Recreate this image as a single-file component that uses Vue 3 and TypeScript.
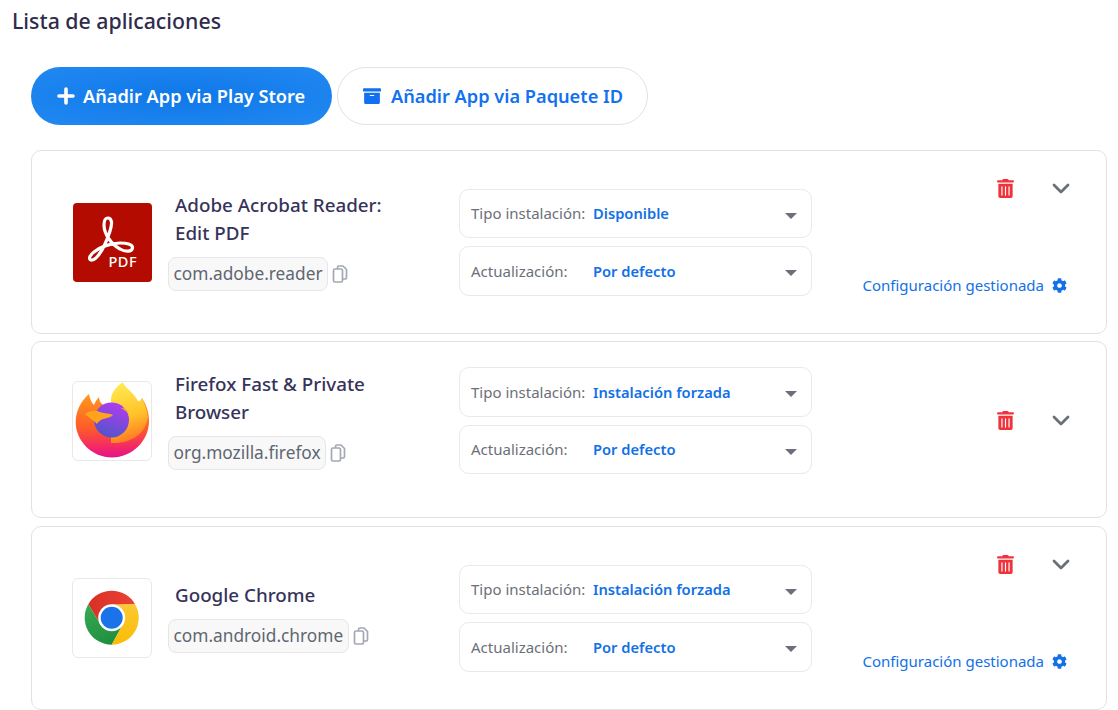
<template>
  <div class="page">
    <h2 class="heading">Lista de aplicaciones</h2>

    <div class="toolbar">
      <button class="btn btn-primary">
        <svg class="btn-plus" viewBox="0 0 18 18"><path d="M9 2v14M2 9h14" /></svg>
        Añadir App via Play Store
      </button>
      <button class="btn btn-outline">
        <svg class="btn-box" viewBox="0 0 512 512"><path d="M32 448c0 17.7 14.3 32 32 32h384c17.7 0 32-14.3 32-32V160H32v288zm160-212c0-6.6 5.4-12 12-12h104c6.6 0 12 5.4 12 12v8c0 6.6-5.4 12-12 12H204c-6.6 0-12-5.4-12-12v-8zM480 32H32C14.3 32 0 46.3 0 64v48c0 8.8 7.2 16 16 16h480c8.8 0 16-7.2 16-16V64c0-17.7-14.3-32-32-32z" /></svg>
        Añadir App via Paquete ID
      </button>
    </div>

    <div class="list">
      <div v-for="app in apps" :key="app.pkg" class="card" :class="{ plain: !app.managed }">
        <div class="logo" :class="{ bordered: app.icon !== 'adobe' }">
          <svg v-if="app.icon === 'adobe'" viewBox="0 0 79 79" width="79" height="79">
            <rect width="79" height="79" rx="4" fill="#b30b00" />
            <path d="M35 15C32 15 31 18 31 22C31 31 38 41 47 46C52 49 59 49 59.500 45C60 41 53 40 47 40C38 40 27 44 21 49C17 52 15 56 18 57C22 58 28 50 32 41C36 32 39 24 38.500 19C38 16 37 15 35 15Z" fill="none" stroke="#fff" stroke-width="3.200" />
            <text x="35.500" y="63.500" class="pdf">PDF</text>
          </svg>
          <svg v-else-if="app.icon === 'firefox'" viewBox="0 0 80 80" width="80" height="80">
            <defs>
              <linearGradient id="ffBody" x1="0.500" y1="0" x2="0.500" y2="1">
                <stop offset="0" stop-color="#ff9a1c" />
                <stop offset="0.550" stop-color="#ff5a2a" />
                <stop offset="0.850" stop-color="#f2256a" />
                <stop offset="1" stop-color="#e0148c" />
              </linearGradient>
              <linearGradient id="ffFlame" x1="0.400" y1="0" x2="0.600" y2="1">
                <stop offset="0" stop-color="#ffe94d" />
                <stop offset="0.550" stop-color="#ffc42a" />
                <stop offset="1" stop-color="#ff6f24" />
              </linearGradient>
              <linearGradient id="ffGlobe" x1="0.700" y1="0" x2="0.300" y2="1">
                <stop offset="0" stop-color="#b13cf0" />
                <stop offset="1" stop-color="#4f55c8" />
              </linearGradient>
            </defs>
            <path d="M17 13C18 18 19 21 22 24C23 21 25 18 27 16C27 20 29 23 33 25L60 25C66 30 70 17 70 17C75 25 77 32 77 40C77 60 60 76.500 40 76.500C20 76.500 3.700 60 3.700 41C3.700 30 9 20 17 13Z" fill="url(#ffBody)" />
            <path d="M50.700 1.300C44 6 39 12 39 19L39 62C60 63 74 52 76 36C75 28 72 22 70 17C68 20 67 21 66 20C62 12 54 8 50.700 1.300Z" fill="url(#ffFlame)" />
            <circle cx="39.500" cy="39" r="17.500" fill="url(#ffGlobe)" />
            <path d="M13 33C18 29 24 29 28 31C33 33 38 32 41 34C38 37 34 37 31 38C28 39 26 41 25 43C23 40 18 38 13 33Z" fill="#ffa31f" />
            <path d="M49 27C53 27 56 29 57 33C55 30 52 29 49 27Z" fill="#ffb52b" />
          </svg>
          <svg v-else viewBox="0 0 80 80" width="80" height="80">
            <defs>
              <linearGradient id="crRed" x1="0" y1="0" x2="1" y2="0">
                <stop offset="0" stop-color="#d93025" />
                <stop offset="1" stop-color="#ea4335" />
              </linearGradient>
              <linearGradient id="crGreen" x1="0.200" y1="0" x2="0.700" y2="1">
                <stop offset="0" stop-color="#34a853" />
                <stop offset="1" stop-color="#1e8e3e" />
              </linearGradient>
              <linearGradient id="crYellow" x1="0.500" y1="0" x2="0.500" y2="1">
                <stop offset="0" stop-color="#fcc934" />
                <stop offset="1" stop-color="#fbbc04" />
              </linearGradient>
            </defs>
            <path d="M63.100 26.200A27 27 0 0 0 16.300 26.200L28.400 46.200L39.700 26.700Z" fill="url(#crRed)" />
            <path d="M16.300 26.200A27 27 0 0 0 39.700 66.700L51 46.200L28.400 46.200Z" fill="url(#crGreen)" />
            <path d="M39.700 66.700A27 27 0 0 0 63.100 26.200L39.700 26.700L51 46.200Z" fill="url(#crYellow)" />
            <circle cx="39.700" cy="39.700" r="13.500" fill="#fff" />
            <circle cx="39.700" cy="39.700" r="11" fill="#1a73e8" />
          </svg>
        </div>

        <div class="info">
          <div class="name">{{ app.name }}</div>
          <div class="pkg-row">
            <span class="pkg">{{ app.pkg }}</span>
            <svg class="copy" viewBox="0 0 16 18" width="16" height="18">
              <path d="M5.500 4V2.500a1.500 1.500 0 0 1 1.500-1.500h4l3.500 3.500v8a1.500 1.500 0 0 1-1.500 1.500h-2" />
              <rect x="1.500" y="4" width="9" height="13" rx="1.500" />
            </svg>
          </div>
        </div>

        <div class="selects">
          <div class="select">
            <span class="select-label">Tipo instalación:</span>
            <span class="select-value">{{ app.install }}</span>
            <span class="caret"></span>
          </div>
          <div class="select">
            <span class="select-label">Actualización:</span>
            <span class="select-value">Por defecto</span>
            <span class="caret"></span>
          </div>
        </div>

        <div class="side">
          <div class="actions">
            <svg class="trash" viewBox="0 0 448 512" width="17" height="19"><path d="M32 464a48 48 0 0 0 48 48h288a48 48 0 0 0 48-48V128H32zm272-256a16 16 0 0 1 32 0v224a16 16 0 0 1-32 0zm-96 0a16 16 0 0 1 32 0v224a16 16 0 0 1-32 0zm-96 0a16 16 0 0 1 32 0v224a16 16 0 0 1-32 0zM432 32H312l-9.400-18.700A24 24 0 0 0 281.100 0H166.800a23.720 23.720 0 0 0-21.400 13.300L136 32H16A16 16 0 0 0 0 48v32a16 16 0 0 0 16 16h416a16 16 0 0 0 16-16V48a16 16 0 0 0-16-16z" /></svg>
            <svg class="chevron" viewBox="0 0 18 11" width="18" height="11"><path d="M2 2l7 7 7-7" /></svg>
          </div>
          <div v-if="app.managed" class="managed">
            Configuración gestionada
            <svg class="gear" viewBox="0 0 512 512" width="15" height="15"><path d="M487.400 315.700l-42.600-24.600c4.300-23.200 4.300-47 0-70.200l42.600-24.600c4.900-2.800 7.100-8.600 5.500-14-11.100-35.600-30-67.800-54.700-94.600-3.800-4.100-10-5.100-14.800-2.300L380.800 110c-17.900-15.400-38.500-27.300-60.800-35.100V25.800c0-5.600-3.900-10.500-9.400-11.700-36.700-8.200-74.300-7.800-109.200 0-5.500 1.200-9.400 6.100-9.400 11.700V75c-22.200 7.900-42.800 19.800-60.800 35.100L88.700 85.500c-4.900-2.800-11-1.900-14.800 2.300-24.700 26.700-43.600 58.900-54.700 94.600-1.700 5.400.6 11.200 5.500 14L67.300 221c-4.300 23.200-4.300 47 0 70.200l-42.600 24.600c-4.900 2.800-7.100 8.600-5.500 14 11.100 35.600 30 67.800 54.700 94.600 3.800 4.100 10 5.100 14.800 2.300l42.600-24.600c17.900 15.400 38.500 27.300 60.800 35.100v49.200c0 5.600 3.900 10.500 9.400 11.700 36.700 8.200 74.300 7.800 109.200 0 5.500-1.200 9.400-6.100 9.400-11.700v-49.200c22.200-7.900 42.800-19.800 60.800-35.100l42.600 24.600c4.900 2.800 11 1.900 14.800-2.300 24.700-26.700 43.600-58.900 54.700-94.600 1.500-5.500-.7-11.300-5.600-14.100zM256 336c-44.100 0-80-35.900-80-80s35.900-80 80-80 80 35.900 80 80-35.900 80-80 80z" /></svg>
          </div>
        </div>
      </div>
    </div>
  </div>
</template>

<script setup lang="ts">
type AppItem = {
  name: string;
  pkg: string;
  icon: 'adobe' | 'firefox' | 'chrome';
  install: string;
  managed: boolean;
};

const apps: AppItem[] = [
  { name: 'Adobe Acrobat Reader: Edit PDF', pkg: 'com.adobe.reader', icon: 'adobe', install: 'Disponible', managed: true },
  { name: 'Firefox Fast & Private Browser', pkg: 'org.mozilla.firefox', icon: 'firefox', install: 'Instalación forzada', managed: false },
  { name: 'Google Chrome', pkg: 'com.android.chrome', icon: 'chrome', install: 'Instalación forzada', managed: true }
];
</script>

<style scoped>
.page {
  width: 1118px;
  height: 710px;
  overflow: hidden;
  background: #fff;
  font-family: "Noto Sans", sans-serif;
}

.heading {
  margin: 0;
  padding: 7px 0 0 12px;
  font-size: 21.300px;
  line-height: 28px;
  font-weight: 500;
  color: #2f2c4b;
}

.toolbar {
  display: flex;
  gap: 5px;
  margin: 32px 0 25px 31px;
}

.btn {
  display: flex;
  align-items: center;
  height: 58px;
  border-radius: 29px;
  font-family: inherit;
  font-size: 18.200px;
  font-weight: 600;
}

.btn-primary {
  width: 301px;
  padding: 0 0 0 26px;
  gap: 8px;
  border: none;
  color: #fff;
  background: radial-gradient(ellipse at center, #0f78e8 0%, #2289f2 100%);
}

.btn-plus {
  width: 18px;
  height: 18px;
  fill: none;
  stroke: #fff;
  stroke-width: 3.600;
  stroke-linecap: round;
}

.btn-outline {
  width: 311px;
  padding: 0 0 0 25px;
  gap: 10px;
  border: 1px solid #e2e2e6;
  color: #1271f0;
  background: #fff;
}

.btn-box {
  width: 18px;
  height: 18px;
  fill: #1271f0;
}

.list {
  display: flex;
  flex-direction: column;
  gap: 7px;
  width: 1076px;
  margin-left: 31px;
}

.card {
  display: flex;
  align-items: center;
  box-sizing: border-box;
  height: 184px;
  padding-left: 41px;
  border: 1px solid #e1e2e6;
  border-radius: 10px;
}

.card.plain {
  height: 177px;
  margin-bottom: 1px;
  padding-bottom: 18px;
}

.logo {
  flex: none;
  box-sizing: border-box;
  width: 80px;
  height: 80px;
  margin-top: 1px;
  margin-right: 15px;
  border-radius: 6px;
}

.logo svg {
  display: block;
}

.logo.bordered {
  position: relative;
  border: 1px solid #e8e8ea;
  margin-top: 0;
  margin-left: -1px;
  margin-right: 16px;
}

.logo.bordered svg {
  margin: -1px;
}

.pdf {
  font-family: "Noto Sans", sans-serif;
  font-size: 14.500px;
  font-weight: 500;
  letter-spacing: 0.5px;
  fill: #fff;
}

.info {
  flex: none;
  width: 291px;
  margin-bottom: 2px;
}

.name {
  width: 225px;
  padding-left: 7px;
  font-size: 18.800px;
  line-height: 28px;
  font-weight: 500;
  color: #36335a;
}

.pkg-row {
  display: flex;
  align-items: center;
  gap: 4px;
  margin-top: 10px;
}

.pkg {
  box-sizing: border-box;
  height: 34px;
  padding: 0 4.500px;
  border: 1px solid #e6e6e8;
  border-radius: 8px;
  background: #f8f8f8;
  font-size: 17.300px;
  line-height: 32px;
  color: #5f6672;
}

.copy {
  fill: #fff;
  stroke: #a3a8b4;
  stroke-width: 1.700;
}

.selects {
  flex: none;
  display: flex;
  flex-direction: column;
  gap: 8px;
  width: 353px;
}

.select {
  display: flex;
  align-items: center;
  box-sizing: border-box;
  height: 49.500px;
  padding: 0 14px 0 11px;
  border: 1px solid #e9e9ec;
  border-radius: 10px;
  font-size: 15px;
}

.select-label {
  width: 122px;
  color: #6b7078;
}

.select-value {
  flex: 1;
  font-size: 14.700px;
  font-weight: 600;
  color: #1271e6;
}

.caret {
  width: 0;
  height: 0;
  margin-top: 5px;
  border-left: 6px solid transparent;
  border-right: 6px solid transparent;
  border-top: 6px solid #6b6f7a;
}

.side {
  flex: 1;
  display: flex;
  flex-direction: column;
  align-items: flex-end;
  justify-content: space-between;
  height: 116px;
  margin-bottom: 10px;
  padding-right: 36px;
}

.card.plain .side {
  height: auto;
  margin-bottom: 0;
}

.actions {
  display: flex;
  align-items: center;
  gap: 38px;
}

.trash {
  fill: #f0323c;
}

.chevron {
  fill: none;
  stroke: #6b7078;
  stroke-width: 2.800;
  stroke-linecap: round;
  stroke-linejoin: round;
}

.managed {
  display: flex;
  align-items: center;
  gap: 8px;
  padding-right: 3px;
  font-size: 15px;
  line-height: 20px;
  color: #1271e6;
}

.gear {
  fill: #1271e6;
}
</style>

<style>
html,
body {
  overflow: hidden;
}
</style>
